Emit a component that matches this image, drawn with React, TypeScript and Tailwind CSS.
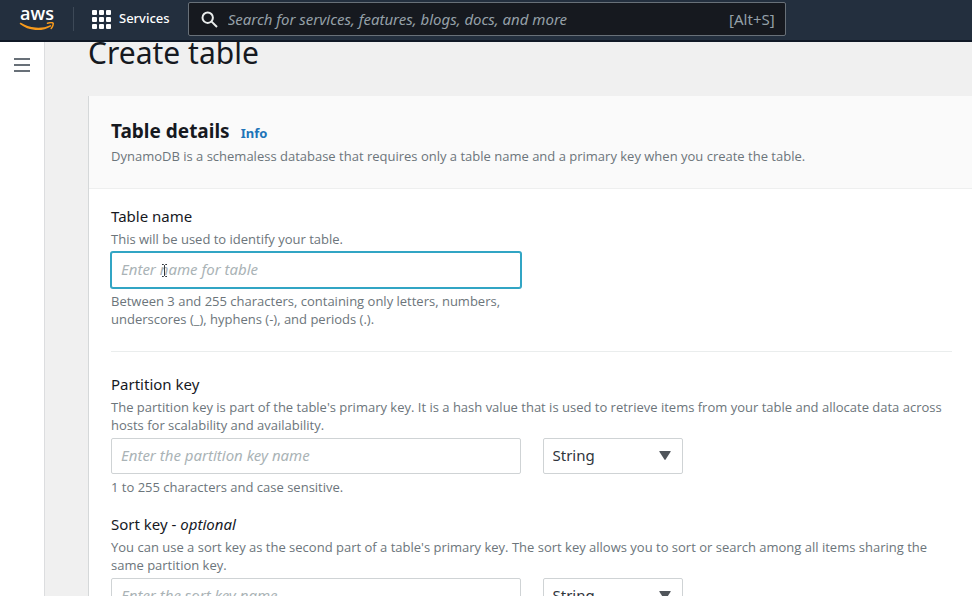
import { useId } from "react";

function AwsLogo() {
  return (
    <a href="#home" aria-label="AWS home" className="flex w-9 flex-col items-center text-white no-underline">
      <span className="h-4 font-['Open_Sans',sans-serif] text-[18px] leading-[14px] font-semibold">aws</span>
      <svg viewBox="0 0 36 10" className="h-[10px] w-9" fill="none" aria-hidden="true">
        <path d="M1.5 1.5C10 8.6 23 9 31.500 3.800C23 8 10 7 1.500 1.500Z" fill="#f79a1c" stroke="#f79a1c" strokeWidth="1.5" strokeLinejoin="round" />
        <path d="M28.5 1.2C31 .5 33.6.6 34.1 1.2c.5.8-.4 3.6-1.9 5.3" stroke="#f79a1c" strokeWidth="1.500" strokeLinecap="round" />
      </svg>
    </a>
  );
}

function GridIcon() {
  const stops = [0, 7, 14];
  return (
    <svg viewBox="0 0 19 19" className="size-[19px]" fill="currentColor" aria-hidden="true">
      {stops.map((y) => stops.map((x) => <rect key={`${x}-${y}`} x={x} y={y} width="5" height="5" rx="1" />))}
    </svg>
  );
}

function TopBar() {
  return (
    <header className="z-10 flex h-[42px] shrink-0 items-center border-b-2 border-[#101926] bg-[#232f3e] pb-[2px] pl-[19px] text-white">
      <AwsLogo />
      <span className="ml-[18px] h-6 w-px bg-[#3d4957]" />
      <button type="button" className="ml-[18px] flex items-center gap-2 text-[13px] font-medium">
        <GridIcon />
        Services
      </button>
      <label className="ml-[18px] flex h-[34px] w-[598px] items-center gap-[10px] rounded-[2px] border border-[#687078] bg-[#16191f] pr-[10px] pl-3">
        <svg viewBox="0 0 17 17" className="size-[17px] shrink-0" fill="none" stroke="#eaeded" strokeWidth="2" aria-hidden="true">
          <circle cx="6.7" cy="6.7" r="5.2" />
          <path d="M10.6 10.6 16 16" />
        </svg>
        <input
          type="search"
          aria-label="Search"
          placeholder="Search for services, features, blogs, docs, and more"
          className="min-w-0 flex-1 bg-transparent text-[15px] outline-none placeholder:text-[#95a0a8] placeholder:italic"
        />
        <kbd className="font-['Noto_Sans',sans-serif] text-[15px] text-[#95a0a8]">[Alt+S]</kbd>
      </label>
    </header>
  );
}

function TypeSelect({ label }: { label: string }) {
  return (
    <div className="relative w-[140px]">
      <select aria-label={label} className="h-9 w-full appearance-none rounded-[2px] border border-[#cfd3d5] bg-white px-[9px] pb-[2px] text-[15px] text-[#30353b]">
        <option>String</option>
        <option>Number</option>
        <option>Binary</option>
      </select>
      <svg viewBox="0 0 12 9" className="pointer-events-none absolute top-[13px] right-3 h-[9px] w-3" fill="#50555b" aria-hidden="true">
        <path d="M.8 0h10.4q.8 0 .4.8L6.6 8.5q-.6.8-1.2 0L.4.8Q0 0 .8 0Z" />
      </svg>
    </div>
  );
}

function TextCursor() {
  return (
    <svg
      viewBox="0 0 7 13"
      className="pointer-events-none absolute top-3 left-[50px] h-[13px] w-[7px]"
      fill="none"
      stroke="#33383d"
      aria-hidden="true"
    >
      <path d="M1 .5h1.500l1 1 1-1H6M3.500 1.500v10M1 12.500h1.500l1-1 1 1H6" />
    </svg>
  );
}

type FieldProps = {
  label: string;
  optional?: boolean;
  hint: string;
  placeholder: string;
  note: string;
  typed?: boolean;
  active?: boolean;
};

function Field({ label, optional, hint, placeholder, note, typed, active }: FieldProps) {
  const id = useId();
  return (
    <div>
      <label htmlFor={id} className="block text-[15px] leading-5 text-[#16191f]">
        {label}
        {optional && (
          <>
            {" - "}
            <i>optional</i>
          </>
        )}
      </label>
      <p className="mt-1 mb-1 font-['Open_Sans',sans-serif] text-[13px] leading-[18px] text-[#6c757b]">{hint}</p>
      <div className="grid grid-cols-2 gap-[22px]">
        <div>
          <div className="relative">
            <input
              id={id}
              type="text"
              placeholder={placeholder}
              className={
                "block h-9 w-full rounded-[2px] border bg-white px-[9px] pb-[2px] text-[15px] outline-none placeholder:text-[#aab3b6] placeholder:italic " +
                (active ? "border-[#31a5c4] ring-1 ring-[#31a5c4]" : "border-[#cfd3d5]")
              }
            />
            {active && <TextCursor />}
          </div>
          <p className="mt-1 font-['Open_Sans',sans-serif] text-[13px] leading-[18px] text-[#6c757b]">{note}</p>
        </div>
        {typed && <TypeSelect label={`${label} type`} />}
      </div>
    </div>
  );
}

export default function App() {
  return (
    <div className="flex h-screen flex-col overflow-hidden bg-[#f0f0f0] font-['Noto_Sans',sans-serif]">
      <TopBar />
      <div className="flex min-h-0 flex-1">
        <nav aria-label="Service navigation" className="w-[45px] shrink-0 border-r border-[#dcdddf] bg-white">
          <button type="button" aria-label="Open navigation" className="mt-4 ml-[14px] block">
            <svg viewBox="0 0 16 14" className="h-[14px] w-4" stroke="#687078" strokeWidth="2" aria-hidden="true">
              <path d="M0 1h16M0 7h16M0 13h16" />
            </svg>
          </button>
        </nav>
        <main className="min-w-0 flex-1 overflow-hidden pl-[43px]">
          <h1 className="-mt-[10px] text-[30px] leading-[42px] text-[#16191f]">Create table</h1>
          <section className="mt-[22px] border-l border-[#d5d8d9] bg-white">
            <div className="border-b border-[#eeefef] bg-[#fafafa] px-[22px] pt-[22px] pb-[23px]">
              <div className="flex items-baseline gap-[11px]">
                <h2 className="text-[19px] leading-[26px] font-bold text-[#16191f]">Table details</h2>
                <a href="#info" className="text-[13px] font-bold text-[#2074b8]">Info</a>
              </div>
              <p className="mt-[3px] font-['Open_Sans',sans-serif] text-[13px] leading-[18px] text-[#6c757b]">
                DynamoDB is a schemaless database that requires only a table name and a primary key when you create the table.
              </p>
            </div>
            <div className="pt-[17px] pr-5 pl-[22px]">
              <div className="border-b border-[#eaeded] pb-[23px]">
                <Field
                  active
                  label="Table name"
                  hint="This will be used to identify your table."
                  placeholder="Enter name for table"
                  note="Between 3 and 255 characters, containing only letters, numbers, underscores (_), hyphens (-), and periods (.)."
                />
              </div>
              <div className="flex flex-col gap-[18px] pt-[22px]">
                <Field
                  typed
                  label="Partition key"
                  hint="The partition key is part of the table's primary key. It is a hash value that is used to retrieve items from your table and allocate data across hosts for scalability and availability."
                  placeholder="Enter the partition key name"
                  note="1 to 255 characters and case sensitive."
                />
                <Field
                  typed
                  optional
                  label="Sort key"
                  hint="You can use a sort key as the second part of a table's primary key. The sort key allows you to sort or search among all items sharing the same partition key."
                  placeholder="Enter the sort key name"
                  note="1 to 255 characters and case sensitive."
                />
              </div>
            </div>
          </section>
        </main>
      </div>
    </div>
  );
}
